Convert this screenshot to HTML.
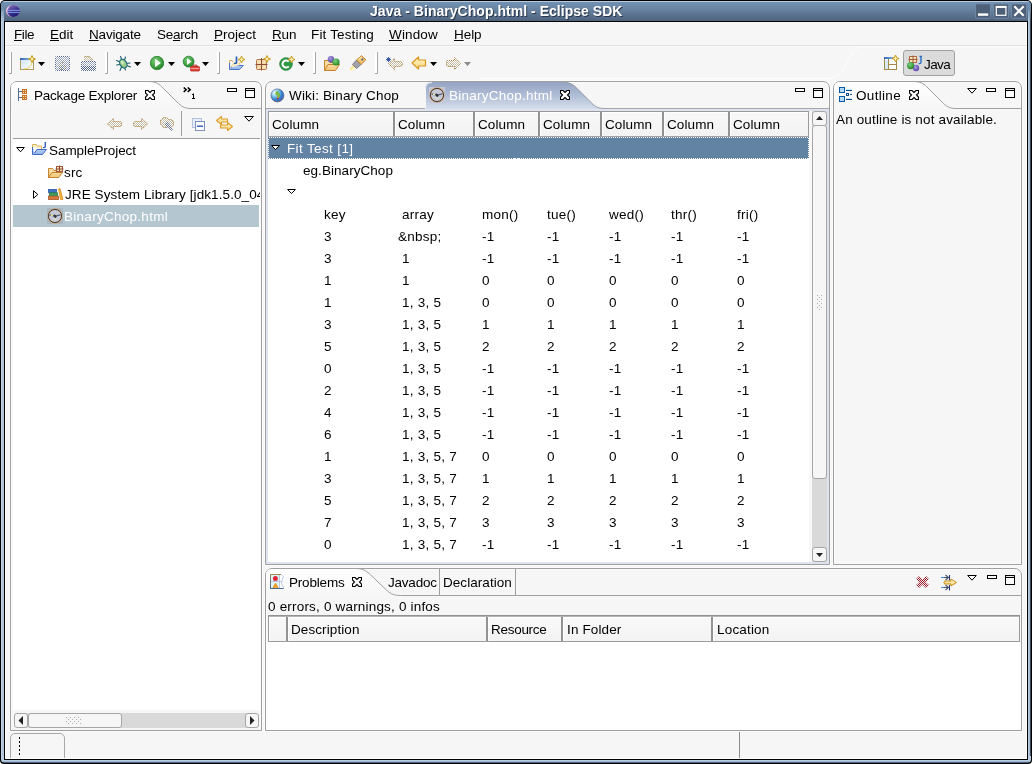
<!DOCTYPE html>
<html><head><meta charset="utf-8"><title>Java - BinaryChop.html - Eclipse SDK</title><style>

html,body{margin:0;padding:0;}
body{width:1032px;height:764px;position:relative;overflow:hidden;background:#fff;font-family:"Liberation Sans", sans-serif;}
.a{position:absolute;box-sizing:border-box;}
.t{position:absolute;will-change:transform;height:20px;line-height:20px;white-space:pre;font-family:"Liberation Sans", sans-serif;}
u{text-decoration:underline;text-underline-offset:1px;}

</style></head><body>
<div class="a" style="left:0;top:0;width:1032px;height:764px;background:#000;border-radius:5px 5px 4px 4px;"></div>
<div class="a" style="left:1px;top:1px;width:1030px;height:20px;border-radius:4px 4px 0 0;background:linear-gradient(to bottom,#b4cce6 0px,#b4cce6 1px,#7292b2 1px,#6a86a5 7px,#5c7591 13px,#4f647e 20px);"></div>
<div class="a" style="left:1px;top:10px;width:1px;height:750px;background:#c0d6ec;"></div>
<div class="a" style="left:2px;top:10px;width:1px;height:750px;background:#aec2d6;"></div>
<div class="a" style="left:3px;top:10px;width:1px;height:750px;background:#b2c6da;"></div>
<div class="a" style="left:1px;top:6px;width:3px;height:16px;background:linear-gradient(to bottom,rgba(110,140,170,1),rgba(110,140,170,0));"></div>
<div class="a" style="left:1028px;top:10px;width:1px;height:750px;background:#b8ccdf;"></div>
<div class="a" style="left:1029px;top:10px;width:1px;height:750px;background:#a6bace;"></div>
<div class="a" style="left:1030px;top:10px;width:1px;height:750px;background:#3a4a5c;"></div>
<div class="a" style="left:1028px;top:6px;width:3px;height:16px;background:linear-gradient(to bottom,rgba(110,140,170,1),rgba(110,140,170,0));"></div>
<div class="a" style="left:1px;top:756px;width:1030px;height:7px;border-radius:0 0 4px 4px;background:linear-gradient(to bottom,#b8cce0 0,#b8cce0 5px,#a0b8d3 5px,#a0b8d3 6px,#4a6280 6px);"></div>
<div class="a" style="left:4px;top:21px;width:1024px;height:739px;background:#000;"></div>
<div class="a" style="left:5px;top:22px;width:1022px;height:737px;background:#f6f6f6;"></div>
<div class="a" style="left:5px;top:758px;width:1022px;height:1px;background:#fff;"></div>
<div class="a" style="left:1026px;top:22px;width:1px;height:737px;background:#fff;"></div>
<div class="a" style="left:5px;top:22px;width:1px;height:737px;background:#fff;"></div>
<svg class="a" style="left:975px;top:3px;" width="16" height="16" viewBox="0 0 16 16"><rect x="0.6" y="0.9" width="14.8" height="14.4" rx="1" fill="#4e6078" stroke="#748ca8" stroke-width="0.9"/><rect x="3" y="10.4" width="10.2" height="2.4" fill="#fff"/></svg>
<svg class="a" style="left:993px;top:3px;" width="16" height="16" viewBox="0 0 16 16"><rect x="0.6" y="0.9" width="14.8" height="14.4" rx="1" fill="#4e6078" stroke="#748ca8" stroke-width="0.9"/><rect x="3.3" y="4" width="9.6" height="8.3" fill="none" stroke="#fff" stroke-width="1.2"/><rect x="2.7" y="2.9" width="10.8" height="2" fill="#fff"/></svg>
<svg class="a" style="left:1011px;top:3px;" width="16" height="16" viewBox="0 0 16 16"><rect x="0.6" y="0.9" width="14.8" height="14.4" rx="1" fill="#4e6078" stroke="#748ca8" stroke-width="0.9"/><path d="M3.3 3.2 L12.7 12.8 M12.7 3.2 L3.3 12.8" stroke="#fff" stroke-width="2.1" fill="none"/></svg>
<svg class="a" style="left:5px;top:4px;" width="16" height="14" viewBox="0 0 16 14"><defs><linearGradient id="eg" x1="0.2" y1="0" x2="0.8" y2="1"><stop offset="0" stop-color="#8a70c0"/><stop offset="0.45" stop-color="#3c3490"/><stop offset="1" stop-color="#0e0c66"/></linearGradient>
<radialGradient id="ep" cx="0.3" cy="0.25" r="0.8"><stop offset="0" stop-color="#f6d4ec"/><stop offset="1" stop-color="#e29cc8"/></radialGradient><clipPath id="ec"><ellipse cx="8" cy="7" rx="7.1" ry="6.1"/></clipPath></defs>
<ellipse cx="8" cy="7" rx="7.1" ry="6.1" fill="url(#ep)"/><g clip-path="url(#ec)"><ellipse cx="10.2" cy="7" rx="7.6" ry="6.8" fill="url(#eg)"/>
<rect x="2" y="5.9" width="14" height="1.1" fill="#7f8fdc"/><rect x="2" y="7.9" width="14" height="1.1" fill="#7f8fdc"/></g></svg>
<div class="a" style="left:5px;top:45px;width:1022px;height:1px;background:#e1e1e1;"></div>
<div class="a" style="left:5px;top:46px;width:1022px;height:1px;background:#fbfbfb;"></div>
<div class="a" style="left:9px;top:52px;width:2px;height:21px;background:#ffffff;"></div>
<div class="a" style="left:11px;top:52px;width:1px;height:22px;background:#a8a8a8;"></div>
<div class="a" style="left:9px;top:73px;width:2px;height:1px;background:#a8a8a8;"></div>
<div class="a" style="left:105px;top:52px;width:2px;height:21px;background:#ffffff;"></div>
<div class="a" style="left:107px;top:52px;width:1px;height:22px;background:#a8a8a8;"></div>
<div class="a" style="left:105px;top:73px;width:2px;height:1px;background:#a8a8a8;"></div>
<div class="a" style="left:217px;top:52px;width:2px;height:21px;background:#ffffff;"></div>
<div class="a" style="left:219px;top:52px;width:1px;height:22px;background:#a8a8a8;"></div>
<div class="a" style="left:217px;top:73px;width:2px;height:1px;background:#a8a8a8;"></div>
<div class="a" style="left:313px;top:52px;width:2px;height:21px;background:#ffffff;"></div>
<div class="a" style="left:315px;top:52px;width:1px;height:22px;background:#a8a8a8;"></div>
<div class="a" style="left:313px;top:73px;width:2px;height:1px;background:#a8a8a8;"></div>
<div class="a" style="left:375px;top:52px;width:2px;height:21px;background:#ffffff;"></div>
<div class="a" style="left:377px;top:52px;width:1px;height:22px;background:#a8a8a8;"></div>
<div class="a" style="left:375px;top:73px;width:2px;height:1px;background:#a8a8a8;"></div>
<svg width="0" height="0" style="position:absolute"><defs>
<pattern id="dz" width="2" height="2" patternUnits="userSpaceOnUse"><rect width="2" height="2" fill="#fff"/><rect x="0" y="0" width="1" height="1" fill="#56668a"/><rect x="1" y="1" width="1" height="1" fill="#56668a"/></pattern>
<pattern id="dzl" width="2" height="2" patternUnits="userSpaceOnUse"><rect width="2" height="2" fill="#fff"/><rect x="0" y="0" width="1" height="1" fill="#9fa8bc"/><rect x="1" y="1" width="1" height="1" fill="#9fa8bc"/></pattern>
<pattern id="dzy" width="2" height="2" patternUnits="userSpaceOnUse"><rect width="2" height="2" fill="#fff"/><rect x="0" y="0" width="1" height="1" fill="#8f7f5e"/><rect x="1" y="1" width="1" height="1" fill="#8f7f5e"/></pattern>
<pattern id="dzyl" width="2" height="2" patternUnits="userSpaceOnUse"><rect width="2" height="2" fill="#fff"/><rect x="0" y="0" width="1" height="1" fill="#c4bca8"/><rect x="1" y="1" width="1" height="1" fill="#c4bca8"/></pattern>
<pattern id="dzr" width="2" height="2" patternUnits="userSpaceOnUse"><rect width="2" height="2" fill="#f0e4e4"/><rect x="0" y="0" width="1" height="1" fill="#9a1f2e"/><rect x="1" y="1" width="1" height="1" fill="#9a1f2e"/></pattern>
<linearGradient id="gwin" x1="0" y1="0" x2="1" y2="1"><stop offset="0" stop-color="#cfe4f7"/><stop offset="1" stop-color="#ffffff"/></linearGradient>
<linearGradient id="gbar" x1="0" y1="0" x2="1" y2="0"><stop offset="0" stop-color="#2d62b5"/><stop offset="1" stop-color="#8fb6e4"/></linearGradient>
<radialGradient id="ggreen" cx="0.4" cy="0.35" r="0.7"><stop offset="0" stop-color="#7fd07f"/><stop offset="0.7" stop-color="#3a9a3a"/><stop offset="1" stop-color="#1f7a24"/></radialGradient>
<radialGradient id="gpurp" cx="0.4" cy="0.35" r="0.7"><stop offset="0" stop-color="#a99be0"/><stop offset="1" stop-color="#5a44a8"/></radialGradient>
<linearGradient id="gyel" x1="0" y1="0" x2="0" y2="1"><stop offset="0" stop-color="#fff6cc"/><stop offset="1" stop-color="#f9d67a"/></linearGradient>
<linearGradient id="gfold" x1="0" y1="0" x2="0" y2="1"><stop offset="0" stop-color="#fbe6b4"/><stop offset="1" stop-color="#f2c77a"/></linearGradient>
<linearGradient id="gbfold" x1="0" y1="0" x2="0" y2="1"><stop offset="0" stop-color="#cfe0f8"/><stop offset="1" stop-color="#8fb2ea"/></linearGradient>
</defs></svg>
<svg class="a" style="left:19px;top:55px;" width="18" height="17" viewBox="0 0 18 17"><rect x="1.5" y="3.5" width="13" height="11" fill="url(#gwin)" stroke="#b39a5c"/><rect x="1" y="3" width="11" height="2" fill="url(#gbar)"/><path d="M13 5.5 C13.5 11, 10 13.5, 5 13.8" fill="none" stroke="#f0cf6a" stroke-width="1"/><path d="M13 0.5 L14 3 L16.5 4 L14 5 L13 7.5 L12 5 L9.5 4 L12 3 Z" fill="#fff3b0" stroke="#c89a1e" stroke-width="1" stroke-linejoin="round"/></svg>
<svg class="a" style="left:38px;top:62px;" width="7" height="4" viewBox="0 0 7 4"><path d="M0 0 H7 L3.5 4 Z" fill="#000"/></svg>
<svg class="a" style="left:55px;top:56px;" width="16" height="15" viewBox="0 0 16 15"><path d="M1 0 H14 L15 1 V14 L14 15 H1 L0 14 V1 Z" fill="url(#dz)"/><rect x="1" y="1" width="13" height="13" fill="url(#dzl)"/><rect x="4" y="9" width="7" height="6" fill="url(#dz)" opacity="0.6"/><rect x="7" y="6" width="1" height="1" fill="#c9a44a"/><rect x="5" y="9" width="1" height="1" fill="#c9a44a"/><rect x="9" y="11" width="1" height="1" fill="#c9a44a"/><rect x="6" y="13" width="1" height="1" fill="#c9a44a"/></svg>
<svg class="a" style="left:81px;top:56px;" width="16" height="15" viewBox="0 0 16 15"><path d="M3 0 H9 L12 3 V5 H3 Z" fill="url(#dzyl)"/><path d="M0 5 H15 V14 L14 15 H1 L0 14 Z" fill="url(#dz)"/><rect x="1" y="6" width="13" height="4" fill="url(#dzl)"/><path d="M3.5 0.5 H8 L11.5 4" stroke="#a88a3a" stroke-width="1" fill="none" stroke-dasharray="1 1"/></svg>
<svg class="a" style="left:115px;top:55px;" width="17" height="17" viewBox="0 0 17 17"><g stroke="#1c5e6e" stroke-width="1.1" fill="none" stroke-linecap="round"><path d="M5.5 1.5 L7 5"/><path d="M10.5 2 L9.5 5"/><path d="M1.5 5.5 L5 7"/><path d="M1.5 10 L5 9.5"/><path d="M15 8 L11.5 8.5"/><path d="M15.5 12 L12 10.5"/><path d="M5 15.5 L6.5 12"/><path d="M10.5 15 L9.5 12.5"/></g><ellipse cx="8.3" cy="8.6" rx="3.3" ry="4.6" transform="rotate(-32 8.3 8.6)" fill="#9ccb86" stroke="#1f6b78" stroke-width="1.2"/><ellipse cx="7.4" cy="7.6" rx="1.3" ry="2.2" transform="rotate(-32 7.4 7.6)" fill="#cfe9c2"/></svg>
<svg class="a" style="left:134px;top:62px;" width="7" height="4" viewBox="0 0 7 4"><path d="M0 0 H7 L3.5 4 Z" fill="#000"/></svg>
<svg class="a" style="left:150px;top:56px;" width="14" height="14" viewBox="0 0 14 14"><circle cx="7" cy="7" r="6.7" fill="url(#ggreen)" stroke="#1e7d28" stroke-width="0.8"/><path d="M5 2.8 L10.8 7 L5 11.2 Z" fill="#fff"/><path d="M5 2.8 L10.8 7 L5 7 Z" fill="#eaf6ea"/></svg>
<svg class="a" style="left:168px;top:62px;" width="7" height="4" viewBox="0 0 7 4"><path d="M0 0 H7 L3.5 4 Z" fill="#000"/></svg>
<svg class="a" style="left:182px;top:55px;" width="18" height="17" viewBox="0 0 18 17"><circle cx="6.6" cy="6.6" r="5.4" fill="url(#ggreen)" stroke="#1e7d28" stroke-width="0.8"/><path d="M5 3.2 L9.6 6.6 L5 10 Z" fill="#fff"/><rect x="8.5" y="11.5" width="9" height="4.5" rx="0.8" fill="#e0483e" stroke="#b8261e" stroke-width="0.8"/><path d="M11 11.5 V10.2 H15 V11.5" fill="none" stroke="#b8261e" stroke-width="1"/><rect x="8.5" y="13" width="9" height="0.9" fill="#f4a39c"/></svg>
<svg class="a" style="left:202px;top:62px;" width="7" height="4" viewBox="0 0 7 4"><path d="M0 0 H7 L3.5 4 Z" fill="#000"/></svg>
<svg class="a" style="left:227px;top:54px;" width="19" height="18" viewBox="0 0 19 18"><path d="M2.5 9 L2.5 15.5 L12.5 15.5 L16.5 11.5 L6.5 11.5 L4 14" fill="url(#gbfold)" stroke="#4b74c8" stroke-width="1" stroke-linejoin="round"/><path d="M2.5 9 L2.5 6.5 L5 6.5 L6 8" fill="none" stroke="#d6b060" stroke-width="1"/><path d="M3.5 13.5 L6.5 9 L13 9 L13 11" fill="#fdf3d0" stroke="#e8c878" stroke-width="0.8"/><path d="M9.5 2.5 V8 Q9.5 9.5 8 9.5 H7" fill="none" stroke="#2b5fb4" stroke-width="1.7"/><path d="M14.5 2.0 L15.5 4.5 L18.0 5.5 L15.5 6.5 L14.5 9.0 L13.5 6.5 L11.0 5.5 L13.5 4.5 Z" fill="#fff3b0" stroke="#c89a1e" stroke-width="1" stroke-linejoin="round"/></svg>
<svg class="a" style="left:254px;top:54px;" width="19" height="18" viewBox="0 0 19 18"><rect x="2.5" y="5.5" width="10" height="10" rx="1" fill="#f0d2a4" stroke="#b4744e" stroke-width="1"/><path d="M7.5 4 V16.5 M1.5 10.5 H13.5" stroke="#8f4a36" stroke-width="1"/><rect x="3.6" y="6.6" width="3" height="3" fill="#fbe6b8"/><rect x="8.6" y="6.6" width="3" height="3" fill="#f6dcae"/><rect x="3.6" y="11.6" width="3" height="3" fill="#f6dcae"/><rect x="8.6" y="11.6" width="3" height="3" fill="#fbe6b8"/><path d="M13 1.5 L14 4 L16.5 5 L14 6 L13 8.5 L12 6 L9.5 5 L12 4 Z" fill="#fff3b0" stroke="#c89a1e" stroke-width="1" stroke-linejoin="round"/></svg>
<svg class="a" style="left:278px;top:54px;" width="19" height="18" viewBox="0 0 19 18"><circle cx="8" cy="10" r="6.3" fill="#2f9a46" stroke="#1f7f36" stroke-width="0.8"/><path d="M10.8 7.6 A3.6 3.6 0 1 0 10.8 12.4" fill="none" stroke="#fff" stroke-width="2"/><path d="M13.5 2.0 L14.5 4.5 L17.0 5.5 L14.5 6.5 L13.5 9.0 L12.5 6.5 L10.0 5.5 L12.5 4.5 Z" fill="#fff3b0" stroke="#c89a1e" stroke-width="1" stroke-linejoin="round"/></svg>
<svg class="a" style="left:298px;top:62px;" width="7" height="4" viewBox="0 0 7 4"><path d="M0 0 H7 L3.5 4 Z" fill="#000"/></svg>
<svg class="a" style="left:323px;top:55px;" width="18" height="17" viewBox="0 0 18 17"><path d="M1.5 5.5 L1.5 15.5 L12.5 15.5 L16.5 9.5 L14 9.5 L14 7.5 L7 7.5 L5.5 5.5 Z" fill="url(#gfold)" stroke="#c8812c" stroke-width="1" stroke-linejoin="round"/><path d="M1.5 15.5 L5 9.5 L16.5 9.5" fill="none" stroke="#c8812c" stroke-width="1"/><circle cx="8" cy="4.2" r="3.2" fill="url(#gpurp)"/><circle cx="13" cy="7" r="3.6" fill="url(#ggreen)"/></svg>
<svg class="a" style="left:349px;top:55px;" width="18" height="17" viewBox="0 0 18 17"><path d="M0.5 15.5 L4 9 L8 13 L2 16 Z" fill="#fff6c0"/><path d="M1.5 14.5 L5 10" stroke="#f4d878" stroke-width="1.2"/><path d="M3.5 9.5 L7.5 5 L12 9.5 L7.5 13.5 Z" fill="#a2a2aa" stroke="#6c6c78" stroke-width="0.8"/><path d="M7.5 5 L12.5 0.8 L16.8 4.8 L12 9.5 Z" fill="#f6c46a" stroke="#b8782a" stroke-width="1"/><path d="M9.5 4.5 L13 1.8" stroke="#fde9a8" stroke-width="1.2"/><circle cx="13.3" cy="4.5" r="0.9" fill="#2b4fa8"/></svg>
<svg class="a" style="left:385px;top:56px;" width="18" height="15" viewBox="0 0 18 15"><path d="M3.5 7.5 L9.5 2.5 V5.5 H15.5 L17.5 7 V9 L15.5 10.5 H9.5 V13.5 Z" fill="url(#dzyl)" stroke="#a87a34" stroke-width="1" stroke-dasharray="1 1"/><path d="M1 3.5 H6 M3.5 1 V6 M1.7 1.7 L5.3 5.3 M5.3 1.7 L1.7 5.3" stroke="#2b4f9c" stroke-width="0.9"/></svg>
<svg class="a" style="left:411px;top:56px;" width="16" height="14" viewBox="0 0 16 14"><path d="M1 7 L7.5 1 V4 H14.5 V10 H7.5 V13 Z" fill="url(#gyel)" stroke="#dc961e" stroke-width="1.2" stroke-linejoin="round"/></svg>
<svg class="a" style="left:430px;top:62px;" width="7" height="4" viewBox="0 0 7 4"><path d="M0 0 H7 L3.5 4 Z" fill="#000"/></svg>
<svg class="a" style="left:446px;top:57px;" width="15" height="13" viewBox="0 0 15 13"><path d="M14.5 6.5 L8.5 0.5 V3.5 H1.5 L0.5 4.5 V8.5 L1.5 9.5 H8.5 V12.5 Z" fill="url(#dzyl)" stroke="#a87a34" stroke-width="1" stroke-dasharray="1 1"/></svg>
<svg class="a" style="left:464px;top:62px;" width="7" height="4" viewBox="0 0 7 4"><path d="M0 0 H7 L3.5 4 Z" fill="#8a8a8a"/></svg>
<svg class="a" style="left:883px;top:54px;" width="17" height="17" viewBox="0 0 17 17"><rect x="1.5" y="3.5" width="12" height="12" fill="#fff" stroke="#a08a4a"/><rect x="1" y="3" width="10" height="2" fill="url(#gbar)"/><rect x="2" y="6" width="3" height="9" fill="#d8eafa"/><path d="M5.5 5 V15 M5.5 10.5 H13" stroke="#a08a4a" stroke-width="1"/><path d="M12.5 1.0 L13.5 3.5 L16.0 4.5 L13.5 5.5 L12.5 8.0 L11.5 5.5 L9.0 4.5 L11.5 3.5 Z" fill="#fff3b0" stroke="#c89a1e" stroke-width="1" stroke-linejoin="round"/></svg>
<svg class="a" style="left:480px;top:44px" width="547" height="40" viewBox="0 0 547 40"><path d="M0 34.5 H350 C 368 34.5, 366 2.5, 384 2.5 H547" fill="none" stroke="#fdfdfd" stroke-width="1"/></svg>
<div class="a" style="left:903px;top:50px;width:52px;height:26px;background:#dbdbdb;border:1px solid #a0a0a0;border-radius:3px;"></div>
<svg class="a" style="left:906px;top:55px;" width="19" height="17" viewBox="0 0 19 17"><rect x="3.5" y="1.5" width="7" height="6" fill="#f8e4bc" stroke="#b4694a" stroke-width="1"/><path d="M7 0.5 V8.5 M2.5 4.5 H11.5" stroke="#a05a3a" stroke-width="1"/><path d="M13.5 1.5 H16 M15 1.5 V7 Q15 8.6 13.4 8.6 H12.6" fill="none" stroke="#2b6fc4" stroke-width="1.4"/><circle cx="10" cy="13" r="3.2" fill="url(#gpurp)"/><circle cx="4.6" cy="10.6" r="3.6" fill="url(#ggreen)"/></svg>
<div class="a" style="left:10px;top:81px;width:252px;height:650px;border:1px solid #a0a0a0;border-radius:7px 7px 0 0;background:#f6f6f6;box-shadow:0 0 0 1px #fbfbfb, inset 0 0 0 1px #fbfbfb;"></div>
<svg class="a" style="left:11px;top:82px;" width="183" height="27" viewBox="0 0 183 27"><defs><linearGradient id="tw150" x1="0" y1="0" x2="0" y2="1"><stop offset="0" stop-color="#ffffff"/><stop offset="1" stop-color="#f6f6f6"/></linearGradient></defs><path d="M0 27 V6 Q0 0 6 0 H139 c 7.0 0.5, 9.5 3, 13.0 6.5 l 14.0 14 c 4.0 4, 7.0 6.5, 14.0 6.5 Z" fill="url(#tw150)"/></svg>
<svg class="a" style="left:150px;top:81px;" width="112" height="29" viewBox="0 0 112 29"><path d="M0 0.5 C 7.0 1, 9.5 3.5, 13.0 7 L 27.0 21 C 31.0 25, 34.0 27.5, 41.0 27.5 H 111" fill="none" stroke="#a0a0a0" stroke-width="1"/></svg>
<svg class="a" style="left:145px;top:90px;" width="10" height="10" viewBox="0 0 10 10"><path d="M0.5 0.5 H3 L5 2.5 L7 0.5 H9.5 V3 L7.5 5 L9.5 7 V9.5 H7 L5 7.5 L3 9.5 H0.5 V7 L2.5 5 L0.5 3 Z" fill="none" stroke="#000" stroke-width="1.1" stroke-linejoin="miter"/></svg>
<svg class="a" style="left:183px;top:87px;" width="12" height="13" viewBox="0 0 12 13"><path d="M0.7 0.5 L3.2 2.7 L0.7 4.9 M4.7 0.5 L7.2 2.7 L4.7 4.9" fill="none" stroke="#000" stroke-width="1.5"/><path d="M9 7.8 L10.5 6.8 V11.5 M9 11.5 H12" fill="none" stroke="#000" stroke-width="1"/></svg>
<svg class="a" style="left:227px;top:88px;shape-rendering:crispEdges" width="10" height="4" viewBox="0 0 10 4"><rect width="10" height="4" fill="#000"/><rect x="1" y="1" width="8" height="2" fill="#fff"/></svg>
<svg class="a" style="left:245px;top:88px;shape-rendering:crispEdges" width="10" height="10" viewBox="0 0 10 10"><rect width="10" height="10" fill="#000"/><rect x="1" y="1" width="8" height="1" fill="#e8e8e8"/><rect x="1" y="3" width="8" height="6" fill="#fff"/></svg>
<div class="a" style="left:181px;top:111px;width:1px;height:25px;background:#a0a0a0;"></div>
<svg class="a" style="left:244px;top:116px;" width="10" height="6" viewBox="0 0 10 6"><path d="M0.7 0.5 H9.3 L5 5.2 Z" fill="#fff" stroke="#000" stroke-width="1"/></svg>
<div class="a" style="left:13px;top:138px;width:247px;height:1px;background:#9e9e9e;"></div>
<div class="a" style="left:13px;top:139px;width:247px;height:571px;background:#fff;"></div>
<div class="a" style="left:13px;top:205px;width:246px;height:22px;background:#b4c7d0;"></div>
<div class="a" style="left:13px;top:710px;width:247px;height:20px;background:#f6f6f6;"></div>
<div class="a" style="left:16px;top:713px;width:241px;height:15px;background:#d9d9d9;"></div>
<div class="a" style="left:14px;top:713px;width:14px;height:15px;border:1px solid #a6a6a6;border-radius:3px;background:#f6f6f6;"></div>
<div class="a" style="left:245px;top:713px;width:14px;height:15px;border:1px solid #a6a6a6;border-radius:3px;background:#f6f6f6;"></div>
<div class="a" style="left:28px;top:713px;width:94px;height:15px;border:1px solid #a6a6a6;border-radius:3px;background:#f6f6f6;"></div>
<svg class="a" style="left:18px;top:716px;" width="5" height="9" viewBox="0 0 5 9"><path d="M5 0 V9 L0.5 4.5 Z" fill="#222"/></svg>
<svg class="a" style="left:250px;top:716px;" width="5" height="9" viewBox="0 0 5 9"><path d="M0 0 V9 L4.5 4.5 Z" fill="#222"/></svg>
<svg class="a" style="left:65px;top:717px;" width="18" height="7" viewBox="0 0 18 7"><g fill="#ababab"><rect x="1" y="0" width="1" height="1"/><rect x="3" y="2" width="1" height="1"/><rect x="1" y="4" width="1" height="1"/><rect x="3" y="6" width="1" height="1"/><rect x="5" y="0" width="1" height="1"/><rect x="7" y="2" width="1" height="1"/><rect x="5" y="4" width="1" height="1"/><rect x="7" y="6" width="1" height="1"/><rect x="9" y="0" width="1" height="1"/><rect x="11" y="2" width="1" height="1"/><rect x="9" y="4" width="1" height="1"/><rect x="11" y="6" width="1" height="1"/><rect x="13" y="0" width="1" height="1"/><rect x="15" y="2" width="1" height="1"/><rect x="13" y="4" width="1" height="1"/><rect x="15" y="6" width="1" height="1"/></g></svg>
<div class="a" style="left:265px;top:81px;width:565px;height:484px;border:1px solid #a0a0a0;border-radius:7px 7px 0 0;background:#f6f6f6;box-shadow:0 0 0 1px #fbfbfb, inset 0 0 0 1px #fbfbfb;"></div>
<div class="a" style="left:266px;top:108px;width:160px;height:1px;background:#a6a6a6;"></div>
<div class="a" style="left:604px;top:108px;width:225px;height:1px;background:#a6a6a6;"></div>
<svg class="a" style="left:420px;top:82px;" width="200" height="27" viewBox="0 0 200 27"><defs><linearGradient id="tg" x1="0" y1="0" x2="0" y2="1"><stop offset="0" stop-color="#95a4c4"/><stop offset="0.5" stop-color="#b0bdd6"/><stop offset="1" stop-color="#d6deec"/></linearGradient></defs>
<path d="M5 27 L5 7 Q5 0 12 0 L144.5 0 c 7 0.5, 9.5 3, 13 6.5 l14 14 c 4 4, 7 6.5, 14 6.5 Z" fill="url(#tg)"/>
<path d="M5.5 27 L5.5 7 Q5.5 0.5 12 0.5" fill="none" stroke="#f4f6fa" stroke-width="1"/>
<path d="M144.5 0.5 c 7 0.5, 9.5 3, 13 6.5 l14 14 c 4 4, 7 5.5, 14 5.5" fill="none" stroke="#9c9ea6" stroke-width="1"/></svg>
<div class="a" style="left:266px;top:109px;width:563px;height:2px;background:#dde3f0;"></div>
<div class="a" style="left:266px;top:109px;width:2px;height:455px;background:#dde3f0;"></div>
<div class="a" style="left:827px;top:109px;width:2px;height:455px;background:#dde3f0;"></div>
<div class="a" style="left:266px;top:562px;width:563px;height:2px;background:#dde3f0;"></div>
<svg class="a" style="left:560px;top:90px;" width="10" height="10" viewBox="0 0 10 10"><path d="M0.5 0.5 H3 L5 2.5 L7 0.5 H9.5 V3 L7.5 5 L9.5 7 V9.5 H7 L5 7.5 L3 9.5 H0.5 V7 L2.5 5 L0.5 3 Z" fill="#fff" stroke="#000" stroke-width="1.1" stroke-linejoin="miter"/></svg>
<svg class="a" style="left:795px;top:88px;shape-rendering:crispEdges" width="10" height="4" viewBox="0 0 10 4"><rect width="10" height="4" fill="#000"/><rect x="1" y="1" width="8" height="2" fill="#fff"/></svg>
<svg class="a" style="left:813px;top:88px;shape-rendering:crispEdges" width="10" height="10" viewBox="0 0 10 10"><rect width="10" height="10" fill="#000"/><rect x="1" y="1" width="8" height="1" fill="#e8e8e8"/><rect x="1" y="3" width="8" height="6" fill="#fff"/></svg>
<div class="a" style="left:268px;top:111px;width:541px;height:451px;background:#fff;"></div>
<div class="a" style="left:809px;top:111px;width:3px;height:451px;background:#f8f8f8;"></div>
<div class="a" style="left:268px;top:111px;width:541px;height:26px;background:linear-gradient(#f8f8f8,#f3f3f3);border-top:1px solid #989898;border-bottom:1px solid #a2a2a2;border-left:1px solid #9a9a9a;border-right:1px solid #9a9a9a;"></div>
<div class="a" style="left:269px;top:112px;width:539px;height:1px;background:#fff;"></div>
<div class="a" style="left:269px;top:112px;width:1px;height:24px;background:#fff;"></div>
<div class="a" style="left:393px;top:112px;width:2px;height:24px;background:#929292;"></div>
<div class="a" style="left:395px;top:112px;width:1px;height:24px;background:#fff;"></div>
<div class="a" style="left:473px;top:112px;width:2px;height:24px;background:#929292;"></div>
<div class="a" style="left:475px;top:112px;width:1px;height:24px;background:#fff;"></div>
<div class="a" style="left:538px;top:112px;width:2px;height:24px;background:#929292;"></div>
<div class="a" style="left:540px;top:112px;width:1px;height:24px;background:#fff;"></div>
<div class="a" style="left:600px;top:112px;width:2px;height:24px;background:#929292;"></div>
<div class="a" style="left:602px;top:112px;width:1px;height:24px;background:#fff;"></div>
<div class="a" style="left:662px;top:112px;width:2px;height:24px;background:#929292;"></div>
<div class="a" style="left:664px;top:112px;width:1px;height:24px;background:#fff;"></div>
<div class="a" style="left:728px;top:112px;width:2px;height:24px;background:#929292;"></div>
<div class="a" style="left:730px;top:112px;width:1px;height:24px;background:#fff;"></div>
<div class="a" style="left:268px;top:137px;width:541px;height:22px;background:#6283a4;"></div>
<svg class="a" style="left:268px;top:137px;shape-rendering:crispEdges" width="541" height="22"><rect x="0.5" y="0.5" width="540" height="21" fill="none" stroke="#fff" stroke-width="1" stroke-dasharray="1 1"/></svg>
<svg class="a" style="left:271px;top:145px;" width="9" height="5" viewBox="0 0 9 5"><path d="M0.6 0.5 H8.4 L4.5 4.6 Z" fill="#fff" stroke="#000" stroke-width="1"/></svg>
<svg class="a" style="left:287px;top:189px;" width="9" height="5" viewBox="0 0 9 5"><path d="M0.6 0.5 H8.4 L4.5 4.6 Z" fill="#fff" stroke="#000" stroke-width="1"/></svg>
<div class="a" style="left:812px;top:111px;width:15px;height:451px;background:#d9d9d9;"></div>
<div class="a" style="left:812px;top:111px;width:15px;height:15px;border:1px solid #a6a6a6;border-radius:3px;background:#f6f6f6;"></div>
<div class="a" style="left:812px;top:125px;width:15px;height:354px;border:1px solid #a6a6a6;border-radius:3px;background:#f6f6f6;"></div>
<div class="a" style="left:812px;top:547px;width:15px;height:15px;border:1px solid #a6a6a6;border-radius:3px;background:#f6f6f6;"></div>
<svg class="a" style="left:816px;top:116px;" width="7" height="4" viewBox="0 0 7 4"><path d="M0 4 H7 L3.5 0 Z" fill="#222"/></svg>
<svg class="a" style="left:816px;top:553px;" width="7" height="4" viewBox="0 0 7 4"><path d="M0 0 H7 L3.5 4 Z" fill="#222"/></svg>
<svg class="a" style="left:817px;top:294px;" width="6" height="16" viewBox="0 0 6 16"><g fill="#ababab"><rect x="0" y="1" width="1" height="1"/><rect x="2" y="3" width="1" height="1"/><rect x="4" y="1" width="1" height="1"/><rect x="0" y="5" width="1" height="1"/><rect x="2" y="7" width="1" height="1"/><rect x="4" y="5" width="1" height="1"/><rect x="0" y="9" width="1" height="1"/><rect x="2" y="11" width="1" height="1"/><rect x="4" y="9" width="1" height="1"/><rect x="0" y="13" width="1" height="1"/><rect x="2" y="15" width="1" height="1"/><rect x="4" y="13" width="1" height="1"/></g></svg>
<div class="a" style="left:833px;top:81px;width:189px;height:484px;border:1px solid #a0a0a0;border-radius:7px 7px 0 0;background:#f6f6f6;box-shadow:0 0 0 1px #fbfbfb, inset 0 0 0 1px #fbfbfb;"></div>
<svg class="a" style="left:834px;top:82px;" width="125" height="27" viewBox="0 0 125 27"><defs><linearGradient id="tw915" x1="0" y1="0" x2="0" y2="1"><stop offset="0" stop-color="#ffffff"/><stop offset="1" stop-color="#f6f6f6"/></linearGradient></defs><path d="M0 27 V6 Q0 0 6 0 H81 c 7.0 0.5, 9.5 3, 13.0 6.5 l 14.0 14 c 4.0 4, 7.0 6.5, 14.0 6.5 Z" fill="url(#tw915)"/></svg>
<svg class="a" style="left:915px;top:81px;" width="107" height="29" viewBox="0 0 107 29"><path d="M0 0.5 C 7.0 1, 9.5 3.5, 13.0 7 L 27.0 21 C 31.0 25, 34.0 27.5, 41.0 27.5 H 106" fill="none" stroke="#a0a0a0" stroke-width="1"/></svg>
<svg class="a" style="left:909px;top:90px;" width="10" height="10" viewBox="0 0 10 10"><path d="M0.5 0.5 H3 L5 2.5 L7 0.5 H9.5 V3 L7.5 5 L9.5 7 V9.5 H7 L5 7.5 L3 9.5 H0.5 V7 L2.5 5 L0.5 3 Z" fill="none" stroke="#000" stroke-width="1.1" stroke-linejoin="miter"/></svg>
<svg class="a" style="left:967px;top:88px;" width="10" height="6" viewBox="0 0 10 6"><path d="M0.7 0.5 H9.3 L5 5.2 Z" fill="#fff" stroke="#000" stroke-width="1"/></svg>
<svg class="a" style="left:986px;top:88px;shape-rendering:crispEdges" width="10" height="4" viewBox="0 0 10 4"><rect width="10" height="4" fill="#000"/><rect x="1" y="1" width="8" height="2" fill="#fff"/></svg>
<svg class="a" style="left:1005px;top:88px;shape-rendering:crispEdges" width="10" height="10" viewBox="0 0 10 10"><rect width="10" height="10" fill="#000"/><rect x="1" y="1" width="8" height="1" fill="#e8e8e8"/><rect x="1" y="3" width="8" height="6" fill="#fff"/></svg>
<div class="a" style="left:265px;top:568px;width:757px;height:163px;border:1px solid #a0a0a0;border-radius:7px 7px 0 0;background:#f6f6f6;box-shadow:0 0 0 1px #fbfbfb, inset 0 0 0 1px #fbfbfb;"></div>
<svg class="a" style="left:266px;top:569px;" width="137" height="27" viewBox="0 0 137 27"><defs><linearGradient id="tw357" x1="0" y1="0" x2="0" y2="1"><stop offset="0" stop-color="#ffffff"/><stop offset="1" stop-color="#f6f6f6"/></linearGradient></defs><path d="M0 27 V6 Q0 0 6 0 H91 c 7.4 0.5, 10.0 3, 13.7 6.5 l 14.7 14 c 4.2 4, 7.4 6.5, 14.7 6.5 Z" fill="url(#tw357)"/></svg>
<svg class="a" style="left:357px;top:568px;" width="665" height="29" viewBox="0 0 665 29"><path d="M0 0.5 C 7.4 1, 10.0 3.5, 13.7 7 L 28.4 21 C 32.6 25, 35.8 27.5, 43.2 27.5 H 664" fill="none" stroke="#a0a0a0" stroke-width="1"/></svg>
<svg class="a" style="left:352px;top:577px;" width="10" height="10" viewBox="0 0 10 10"><path d="M0.5 0.5 H3 L5 2.5 L7 0.5 H9.5 V3 L7.5 5 L9.5 7 V9.5 H7 L5 7.5 L3 9.5 H0.5 V7 L2.5 5 L0.5 3 Z" fill="none" stroke="#000" stroke-width="1.1" stroke-linejoin="miter"/></svg>
<div class="a" style="left:439px;top:569px;width:1px;height:26px;background:#a0a0a0;"></div>
<div class="a" style="left:515px;top:569px;width:1px;height:26px;background:#a0a0a0;"></div>
<svg class="a" style="left:967px;top:575px;" width="10" height="6" viewBox="0 0 10 6"><path d="M0.7 0.5 H9.3 L5 5.2 Z" fill="#fff" stroke="#000" stroke-width="1"/></svg>
<svg class="a" style="left:987px;top:575px;shape-rendering:crispEdges" width="10" height="4" viewBox="0 0 10 4"><rect width="10" height="4" fill="#000"/><rect x="1" y="1" width="8" height="2" fill="#fff"/></svg>
<svg class="a" style="left:1005px;top:575px;shape-rendering:crispEdges" width="10" height="10" viewBox="0 0 10 10"><rect width="10" height="10" fill="#000"/><rect x="1" y="1" width="8" height="1" fill="#e8e8e8"/><rect x="1" y="3" width="8" height="6" fill="#fff"/></svg>
<div class="a" style="left:266px;top:642px;width:755px;height:88px;background:#fff;"></div>
<div class="a" style="left:268px;top:617px;width:751px;height:24px;background:#f6f6f6;"></div>
<div class="a" style="left:268px;top:615px;width:752px;height:27px;background:linear-gradient(#f8f8f8,#f3f3f3);border-top:2px solid #929292;border-bottom:1px solid #9c9c9c;border-left:1px solid #9a9a9a;border-right:1px solid #9a9a9a;"></div>
<div class="a" style="left:269px;top:616px;width:750px;height:1px;background:#b4b4b4;"></div>
<div class="a" style="left:269px;top:617px;width:750px;height:1px;background:#fff;"></div>
<div class="a" style="left:269px;top:617px;width:1px;height:24px;background:#fff;"></div>
<div class="a" style="left:286px;top:617px;width:2px;height:24px;background:#929292;"></div>
<div class="a" style="left:288px;top:617px;width:1px;height:24px;background:#fff;"></div>
<div class="a" style="left:486px;top:617px;width:2px;height:24px;background:#929292;"></div>
<div class="a" style="left:488px;top:617px;width:1px;height:24px;background:#fff;"></div>
<div class="a" style="left:561px;top:617px;width:2px;height:24px;background:#929292;"></div>
<div class="a" style="left:563px;top:617px;width:1px;height:24px;background:#fff;"></div>
<div class="a" style="left:711px;top:617px;width:2px;height:24px;background:#929292;"></div>
<div class="a" style="left:713px;top:617px;width:1px;height:24px;background:#fff;"></div>
<svg class="a" style="left:18px;top:88px;shape-rendering:crispEdges" width="10" height="13" viewBox="0 0 10 13"><rect x="0" y="0" width="1" height="13" fill="#5a6b90"/><rect x="1" y="3" width="3" height="1" fill="#5a6b90"/><rect x="1" y="9" width="3" height="1" fill="#5a6b90"/><rect x="4" y="1" width="5" height="5" fill="#c96f28"/><rect x="4" y="7" width="5" height="5" fill="#c96f28"/><rect x="5" y="2" width="1" height="1" fill="#fbe7a8"/><rect x="5" y="4" width="1" height="1" fill="#fbe7a8"/><rect x="5" y="8" width="1" height="1" fill="#fbe7a8"/><rect x="5" y="10" width="1" height="1" fill="#fbe7a8"/><rect x="7" y="2" width="1" height="1" fill="#fbe7a8"/><rect x="7" y="4" width="1" height="1" fill="#fbe7a8"/><rect x="7" y="8" width="1" height="1" fill="#fbe7a8"/><rect x="7" y="10" width="1" height="1" fill="#fbe7a8"/></svg>
<svg class="a" style="left:107px;top:118px;" width="15" height="12" viewBox="0 0 15 12"><path d="M0.5 6.0 L6.5 0.5 V3.5 H13.5 L14.5 4.5 V7.5 L13.5 8.5 H6.5 V11.5 Z" fill="url(#dzyl)" stroke="#a87a34" stroke-width="1" stroke-dasharray="1 1"/></svg>
<svg class="a" style="left:133px;top:118px;" width="15" height="12" viewBox="0 0 15 12"><path d="M14.5 6.0 L8.5 0.5 V3.5 H1.5 L0.5 4.5 V7.5 L1.5 8.5 H8.5 V11.5 Z" fill="url(#dzyl)" stroke="#a87a34" stroke-width="1" stroke-dasharray="1 1"/></svg>
<svg class="a" style="left:160px;top:117px;" width="14" height="15" viewBox="0 0 14 15"><path d="M0.5 3.5 L3.5 0.5 H6.5 L8.5 2.5 H11.5 L13.5 4.5 V8.5 L11.5 10.5 H3.5 L0.5 7.5 Z" fill="url(#dzyl)" stroke="#a87a34" stroke-width="1" stroke-dasharray="1 1"/><path d="M7 4.5 L9.5 7 L7 9.5 L4.5 7 Z" fill="#c8d4e0"/><path d="M5 7 L7.5 4.5 L13 12 L12 14 L10.5 13.5 L8.5 10.5 L6.5 11 Z" fill="url(#dz)" opacity="0.85"/></svg>
<svg class="a" style="left:192px;top:118px;" width="14" height="14" viewBox="0 0 14 14"><rect x="0.5" y="0.5" width="9" height="9" fill="#e6edf8" stroke="#b4c2dc"/><rect x="3.5" y="3.5" width="9" height="9" fill="#fff" stroke="#7d90c0"/><rect x="5" y="7.5" width="6" height="1.4" fill="#2c5cb0"/></svg>
<svg class="a" style="left:215px;top:115px;" width="19" height="18" viewBox="0 0 19 18"><path d="M1.5 5.5 L6.5 1.5 V4 H12.5 V7 H6.5 V9.5 Z" fill="url(#gyel)" stroke="#dc9b2c" stroke-width="1.1" stroke-linejoin="round"/><path d="M17.5 11.5 L12.5 7.5 V10 H5.5 V13 H12.5 V15.5 Z" fill="url(#gyel)" stroke="#dc9b2c" stroke-width="1.1" stroke-linejoin="round"/></svg>
<svg class="a" style="left:16px;top:147px;" width="9" height="6" viewBox="0 0 9 6"><path d="M0.7 0.5 H8.3 L4.5 4.8 Z" fill="#fff" stroke="#000" stroke-width="1"/></svg>
<svg class="a" style="left:33px;top:190px;" width="6" height="9" viewBox="0 0 6 9"><path d="M0.5 0.7 V8.3 L4.8 4.5 Z" fill="#fff" stroke="#000" stroke-width="1"/></svg>
<svg class="a" style="left:31px;top:141px;" width="17" height="16" viewBox="0 0 17 16"><path d="M1.5 5 V13.5 H11.5 L15.5 8.5 H6 L3.5 12" fill="url(#gbfold)" stroke="#3f69c4" stroke-width="1" stroke-linejoin="round"/><path d="M1.5 6 V3.5 H5.5 L6.5 5 H10.5 V8" fill="#fdf0c8" stroke="#dcb45c" stroke-width="1"/><path d="M14.3 1 V5.3 Q14.3 6.6 13 6.6 H12" fill="none" stroke="#2b62c0" stroke-width="1.4"/></svg>
<svg class="a" style="left:48px;top:165px;" width="16" height="14" viewBox="0 0 16 14"><path d="M0.5 3.5 V12.5 H10.5 L14.5 7.5 H12 V5.5 H6 L4.5 3.5 Z" fill="url(#gfold)" stroke="#c8812c" stroke-width="1" stroke-linejoin="round"/><path d="M0.5 12.5 L4 7.5 H14.5" fill="none" stroke="#c8812c" stroke-width="1"/><rect x="8.5" y="1.5" width="6" height="5" fill="#f8e2b8" stroke="#a4583a" stroke-width="1"/><path d="M11.5 0.5 V7 M7.5 4 H15.5" stroke="#8f4a36" stroke-width="1"/></svg>
<svg class="a" style="left:48px;top:188px;" width="16" height="12" viewBox="0 0 16 12"><rect x="0.5" y="1.5" width="8" height="3" fill="#3f74c8" stroke="#2a55a0" stroke-width="0.8"/><rect x="1.5" y="4.8" width="8" height="3" fill="#3fa064" stroke="#2a7a48" stroke-width="0.8"/><rect x="0.5" y="8.2" width="10" height="3.3" fill="#d8783a" stroke="#a85424" stroke-width="0.8"/><path d="M10.5 1 L12 0.5 L15 11.5 H12.5 Z" fill="#f4b63a" stroke="#d8922a" stroke-width="0.8"/></svg>
<svg class="a" style="left:47px;top:208px;" width="16" height="16" viewBox="0 0 16 16"><rect width="16" height="16" fill="#a9b7bf"/><circle cx="8" cy="8" r="6.9" fill="#c6cad6" stroke="#c8a484" stroke-width="1.6"/><circle cx="8" cy="8" r="6.6" fill="none" stroke="#4a3a32" stroke-width="1"/><path d="M2.5 6.8 L8 8.2 L13.5 6.8" fill="none" stroke="#596070" stroke-width="1.2"/><path d="M7 7 L9 9.5" stroke="#2f3442" stroke-width="2.2"/><rect x="4" y="6.5" width="2" height="1.5" fill="#e8e08a"/><rect x="6.5" y="10.5" width="3" height="1.2" fill="#e6e6c0"/></svg>
<svg class="a" style="left:429px;top:87px;" width="16" height="16" viewBox="0 0 16 16"><rect width="16" height="16" fill="#c4c7d4"/><circle cx="8" cy="8" r="6.9" fill="#c6cad6" stroke="#c8a484" stroke-width="1.6"/><circle cx="8" cy="8" r="6.6" fill="none" stroke="#4a3a32" stroke-width="1"/><path d="M2.5 6.8 L8 8.2 L13.5 6.8" fill="none" stroke="#596070" stroke-width="1.2"/><path d="M7 7 L9 9.5" stroke="#2f3442" stroke-width="2.2"/><rect x="4" y="6.5" width="2" height="1.5" fill="#e8e08a"/><rect x="6.5" y="10.5" width="3" height="1.2" fill="#e6e6c0"/></svg>
<svg class="a" style="left:270px;top:88px;" width="15" height="15" viewBox="0 0 15 15"><defs><radialGradient id="gl" cx="0.32" cy="0.3" r="0.8"><stop offset="0" stop-color="#ffffff"/><stop offset="0.3" stop-color="#9ad6ee"/><stop offset="0.6" stop-color="#3a8ad4"/><stop offset="1" stop-color="#3a55bc"/></radialGradient></defs><circle cx="7.4" cy="7.4" r="6.5" fill="url(#gl)" stroke="#4a5a88" stroke-width="0.6"/><path d="M6 3.5 L8 3 L9 5 L10.5 6.5 L9.5 9 L8 10.5 L7 9 L6.5 7 L5 6 Z" fill="#7ab848"/><path d="M7 8 L9 8.5 L8.5 10.5 L7.5 10 Z" fill="#b0a040"/><rect x="7" y="10" width="1.3" height="1.3" fill="#d01818"/><path d="M3.5 12.5 A6.5 6.5 0 0 0 13.5 9" fill="none" stroke="#8a8040" stroke-width="0.7" stroke-dasharray="1 1"/></svg>
<svg class="a" style="left:839px;top:87px;shape-rendering:crispEdges" width="14" height="15" viewBox="0 0 14 15"><rect x="0.5" y="0.5" width="5" height="5" fill="#b4daf8" stroke="#0a5aa8"/><rect x="0.5" y="9.5" width="5" height="5" fill="#b4daf8" stroke="#0a5aa8"/><rect x="7" y="2" width="6" height="1" fill="#cbeaff"/><rect x="7" y="3" width="6" height="1" fill="#0a4a90"/><rect x="7" y="11" width="6" height="1" fill="#cbeaff"/><rect x="7" y="12" width="6" height="1" fill="#0a4a90"/><rect x="7" y="6" width="3" height="3" fill="#0a4a8a"/><rect x="8" y="7" width="1" height="1" fill="#fff"/><rect x="11" y="7" width="2" height="1" fill="#0a4a90"/></svg>
<svg class="a" style="left:270px;top:574px;" width="15" height="15" viewBox="0 0 15 15"><defs><linearGradient id="pb" x1="0" y1="0" x2="0" y2="1"><stop offset="0" stop-color="#9a8a50"/><stop offset="1" stop-color="#46689e"/></linearGradient></defs><path d="M0.5 0.5 H11.5 L13.5 2.5 L12 6 L11.5 10 L13.5 13 V14.5 H0.5 Z" fill="#fff" stroke="#a8bce0" stroke-width="0.8"/><rect x="1" y="1" width="8" height="13" fill="#e2f6fa"/><path d="M0.5 14.5 V0.5 H11" fill="none" stroke="url(#pb)" stroke-width="1"/><path d="M0.5 0.5 V14.5" stroke="url(#pb)" stroke-width="1"/><path d="M0 14.5 H13.5" stroke="#46689e" stroke-width="1"/><path d="M1 7.5 H11.5 M9.5 1 V14" stroke="#b4c0d8" stroke-width="0.9"/><circle cx="5.4" cy="4.4" r="2.5" fill="#e02838"/><path d="M5.5 9 L8.2 13.6 H2.8 Z" fill="#f0a020" stroke="#d88a18" stroke-width="0.6"/></svg>
<svg class="a" style="left:916px;top:576px;" width="13" height="12" viewBox="0 0 13 12"><path d="M0 3 L3 0 L6.5 3.5 L10 0 L13 3 L9.5 6 L13 9 L10 12 L6.5 8.5 L3 12 L0 9 L3.5 6 Z" fill="url(#dzr)"/></svg>
<svg class="a" style="left:940px;top:574px;" width="17" height="17" viewBox="0 0 17 17"><g fill="none" stroke-width="1.1"><path d="M1 3.5 H8" stroke="#4a90d0"/><path d="M4 3.5 H8 M5.5 1 L8.5 3.5 L5.5 6" stroke="#4a5670"/><path d="M9.5 1 V6.5" stroke="#2a3a70"/><path d="M1 13.5 H8" stroke="#4a90d0"/><path d="M4 13.5 H8 M5.5 11 L8.5 13.5 L5.5 16" stroke="#4a5670"/><path d="M9.5 11 V16.5" stroke="#2a3a70"/></g><path d="M4.5 7 H11 V5 L16.5 8.5 L11 12 V10 H4.5 Q3.5 8.5 4.5 7 Z" fill="url(#gyel)" stroke="#c88a18" stroke-width="1" stroke-linejoin="round"/></svg>
<div class="a" style="left:10px;top:733px;width:55px;height:30px;border:1px solid #a8a8a8;border-radius:5px;background:#f6f6f6;clip-path:inset(0 0 4px 0);"></div>
<div class="a" style="left:5px;top:758px;width:1022px;height:1px;background:#fff;"></div>
<div class="a" style="left:18.6px;top:737.2px;width:1.7px;height:1.7px;background:#000;"></div>
<div class="a" style="left:18.6px;top:741.2px;width:1.7px;height:1.7px;background:#000;"></div>
<div class="a" style="left:18.6px;top:745.2px;width:1.7px;height:1.7px;background:#000;"></div>
<div class="a" style="left:18.6px;top:749.2px;width:1.7px;height:1.7px;background:#000;"></div>
<div class="a" style="left:18.6px;top:753.2px;width:1.7px;height:1.7px;background:#000;"></div>
<div class="a" style="left:739px;top:732px;width:1px;height:26px;background:#8c8c8c;"></div>
<div class="t" style="left:369.5px;top:1px;font-size:14px;color:#fff;font-weight:bold;text-shadow:1px 1px 0 #2a3648;letter-spacing:0.033px;">Java - BinaryChop.html - Eclipse SDK</div>
<div class="t" style="left:13.6px;top:25px;font-size:13.5px;color:#000;letter-spacing:-0.391px;"><u>F</u>ile</div>
<div class="t" style="left:49.9px;top:25px;font-size:13.5px;color:#000;letter-spacing:-0.020px;"><u>E</u>dit</div>
<div class="t" style="left:89px;top:25px;font-size:13.5px;color:#000;letter-spacing:-0.187px;"><u>N</u>avigate</div>
<div class="t" style="left:156.5px;top:25px;font-size:13.5px;color:#000;letter-spacing:-0.299px;">Se<u>a</u>rch</div>
<div class="t" style="left:213.7px;top:25px;font-size:13.5px;color:#000;"><u>P</u>roject</div>
<div class="t" style="left:271.6px;top:25px;font-size:13.5px;color:#000;letter-spacing:-0.194px;"><u>R</u>un</div>
<div class="t" style="left:311.4px;top:25px;font-size:13.5px;color:#000;letter-spacing:0.156px;">Fit Testing</div>
<div class="t" style="left:389.3px;top:25px;font-size:13.5px;color:#000;letter-spacing:0.128px;"><u>W</u>indow</div>
<div class="t" style="left:453.5px;top:25px;font-size:13.5px;color:#000;letter-spacing:-0.066px;"><u>H</u>elp</div>
<div class="t" style="left:924px;top:55px;font-size:13.5px;color:#000;letter-spacing:-0.583px;">Java</div>
<div class="t" style="left:33.6px;top:86px;font-size:13.5px;color:#000;letter-spacing:-0.223px;">Package Explorer</div>
<div class="t" style="left:48.5px;top:141px;font-size:13.5px;color:#000;letter-spacing:-0.061px;">SampleProject</div>
<div class="t" style="left:64px;top:163px;font-size:13.5px;color:#000;letter-spacing:0.167px;">src</div>
<div class="t" style="left:64.5px;top:185px;font-size:13.5px;color:#000;width:194.5px;overflow:hidden;letter-spacing:0.09px;">JRE System Library [jdk1.5.0_04</div>
<div class="t" style="left:64px;top:207px;font-size:13.5px;color:#fff;letter-spacing:0.280px;">BinaryChop.html</div>
<div class="t" style="left:288.8px;top:86px;font-size:13.5px;color:#000;letter-spacing:0.159px;">Wiki: Binary Chop</div>
<div class="t" style="left:448.7px;top:86px;font-size:13.5px;color:#fff;letter-spacing:0.247px;">BinaryChop.html</div>
<div class="t" style="left:272.4px;top:115px;font-size:13.5px;color:#000;letter-spacing:0.095px;">Column</div>
<div class="t" style="left:398.4px;top:115px;font-size:13.5px;color:#000;letter-spacing:0.095px;">Column</div>
<div class="t" style="left:478.4px;top:115px;font-size:13.5px;color:#000;letter-spacing:0.095px;">Column</div>
<div class="t" style="left:543.4px;top:115px;font-size:13.5px;color:#000;letter-spacing:0.095px;">Column</div>
<div class="t" style="left:605.4px;top:115px;font-size:13.5px;color:#000;letter-spacing:0.095px;">Column</div>
<div class="t" style="left:667.4px;top:115px;font-size:13.5px;color:#000;letter-spacing:0.095px;">Column</div>
<div class="t" style="left:733.4px;top:115px;font-size:13.5px;color:#000;letter-spacing:0.095px;">Column</div>
<div class="t" style="left:287.4px;top:139px;font-size:13.5px;color:#fff;letter-spacing:0.372px;">Fit Test [1]</div>
<div class="t" style="left:303.3px;top:161px;font-size:13.5px;color:#000;letter-spacing:0.053px;">eg.BinaryChop</div>
<div class="t" style="left:323.5px;top:205px;font-size:13.5px;color:#000;letter-spacing:0.25px;">key</div>
<div class="t" style="left:397.7px;top:205px;font-size:13.5px;color:#000;letter-spacing:0.25px;"> array</div>
<div class="t" style="left:482px;top:205px;font-size:13.5px;color:#000;letter-spacing:0.25px;">mon()</div>
<div class="t" style="left:546.6px;top:205px;font-size:13.5px;color:#000;letter-spacing:0.25px;">tue()</div>
<div class="t" style="left:609px;top:205px;font-size:13.5px;color:#000;letter-spacing:0.25px;">wed()</div>
<div class="t" style="left:670.6px;top:205px;font-size:13.5px;color:#000;letter-spacing:0.25px;">thr()</div>
<div class="t" style="left:736.6px;top:205px;font-size:13.5px;color:#000;letter-spacing:0.25px;">fri()</div>
<div class="t" style="left:323.5px;top:227px;font-size:13.5px;color:#000;letter-spacing:0.25px;">3</div>
<div class="t" style="left:397.7px;top:227px;font-size:13.5px;color:#000;letter-spacing:0.25px;">&amp;nbsp;</div>
<div class="t" style="left:482px;top:227px;font-size:13.5px;color:#000;letter-spacing:0.25px;">-1</div>
<div class="t" style="left:546.6px;top:227px;font-size:13.5px;color:#000;letter-spacing:0.25px;">-1</div>
<div class="t" style="left:609px;top:227px;font-size:13.5px;color:#000;letter-spacing:0.25px;">-1</div>
<div class="t" style="left:670.6px;top:227px;font-size:13.5px;color:#000;letter-spacing:0.25px;">-1</div>
<div class="t" style="left:736.6px;top:227px;font-size:13.5px;color:#000;letter-spacing:0.25px;">-1</div>
<div class="t" style="left:323.5px;top:249px;font-size:13.5px;color:#000;letter-spacing:0.25px;">3</div>
<div class="t" style="left:397.7px;top:249px;font-size:13.5px;color:#000;letter-spacing:0.25px;"> 1</div>
<div class="t" style="left:482px;top:249px;font-size:13.5px;color:#000;letter-spacing:0.25px;">-1</div>
<div class="t" style="left:546.6px;top:249px;font-size:13.5px;color:#000;letter-spacing:0.25px;">-1</div>
<div class="t" style="left:609px;top:249px;font-size:13.5px;color:#000;letter-spacing:0.25px;">-1</div>
<div class="t" style="left:670.6px;top:249px;font-size:13.5px;color:#000;letter-spacing:0.25px;">-1</div>
<div class="t" style="left:736.6px;top:249px;font-size:13.5px;color:#000;letter-spacing:0.25px;">-1</div>
<div class="t" style="left:323.5px;top:271px;font-size:13.5px;color:#000;letter-spacing:0.25px;">1</div>
<div class="t" style="left:397.7px;top:271px;font-size:13.5px;color:#000;letter-spacing:0.25px;"> 1</div>
<div class="t" style="left:482px;top:271px;font-size:13.5px;color:#000;letter-spacing:0.25px;">0</div>
<div class="t" style="left:546.6px;top:271px;font-size:13.5px;color:#000;letter-spacing:0.25px;">0</div>
<div class="t" style="left:609px;top:271px;font-size:13.5px;color:#000;letter-spacing:0.25px;">0</div>
<div class="t" style="left:670.6px;top:271px;font-size:13.5px;color:#000;letter-spacing:0.25px;">0</div>
<div class="t" style="left:736.6px;top:271px;font-size:13.5px;color:#000;letter-spacing:0.25px;">0</div>
<div class="t" style="left:323.5px;top:293px;font-size:13.5px;color:#000;letter-spacing:0.25px;">1</div>
<div class="t" style="left:397.7px;top:293px;font-size:13.5px;color:#000;letter-spacing:0.25px;"> 1, 3, 5</div>
<div class="t" style="left:482px;top:293px;font-size:13.5px;color:#000;letter-spacing:0.25px;">0</div>
<div class="t" style="left:546.6px;top:293px;font-size:13.5px;color:#000;letter-spacing:0.25px;">0</div>
<div class="t" style="left:609px;top:293px;font-size:13.5px;color:#000;letter-spacing:0.25px;">0</div>
<div class="t" style="left:670.6px;top:293px;font-size:13.5px;color:#000;letter-spacing:0.25px;">0</div>
<div class="t" style="left:736.6px;top:293px;font-size:13.5px;color:#000;letter-spacing:0.25px;">0</div>
<div class="t" style="left:323.5px;top:315px;font-size:13.5px;color:#000;letter-spacing:0.25px;">3</div>
<div class="t" style="left:397.7px;top:315px;font-size:13.5px;color:#000;letter-spacing:0.25px;"> 1, 3, 5</div>
<div class="t" style="left:482px;top:315px;font-size:13.5px;color:#000;letter-spacing:0.25px;">1</div>
<div class="t" style="left:546.6px;top:315px;font-size:13.5px;color:#000;letter-spacing:0.25px;">1</div>
<div class="t" style="left:609px;top:315px;font-size:13.5px;color:#000;letter-spacing:0.25px;">1</div>
<div class="t" style="left:670.6px;top:315px;font-size:13.5px;color:#000;letter-spacing:0.25px;">1</div>
<div class="t" style="left:736.6px;top:315px;font-size:13.5px;color:#000;letter-spacing:0.25px;">1</div>
<div class="t" style="left:323.5px;top:337px;font-size:13.5px;color:#000;letter-spacing:0.25px;">5</div>
<div class="t" style="left:397.7px;top:337px;font-size:13.5px;color:#000;letter-spacing:0.25px;"> 1, 3, 5</div>
<div class="t" style="left:482px;top:337px;font-size:13.5px;color:#000;letter-spacing:0.25px;">2</div>
<div class="t" style="left:546.6px;top:337px;font-size:13.5px;color:#000;letter-spacing:0.25px;">2</div>
<div class="t" style="left:609px;top:337px;font-size:13.5px;color:#000;letter-spacing:0.25px;">2</div>
<div class="t" style="left:670.6px;top:337px;font-size:13.5px;color:#000;letter-spacing:0.25px;">2</div>
<div class="t" style="left:736.6px;top:337px;font-size:13.5px;color:#000;letter-spacing:0.25px;">2</div>
<div class="t" style="left:323.5px;top:359px;font-size:13.5px;color:#000;letter-spacing:0.25px;">0</div>
<div class="t" style="left:397.7px;top:359px;font-size:13.5px;color:#000;letter-spacing:0.25px;"> 1, 3, 5</div>
<div class="t" style="left:482px;top:359px;font-size:13.5px;color:#000;letter-spacing:0.25px;">-1</div>
<div class="t" style="left:546.6px;top:359px;font-size:13.5px;color:#000;letter-spacing:0.25px;">-1</div>
<div class="t" style="left:609px;top:359px;font-size:13.5px;color:#000;letter-spacing:0.25px;">-1</div>
<div class="t" style="left:670.6px;top:359px;font-size:13.5px;color:#000;letter-spacing:0.25px;">-1</div>
<div class="t" style="left:736.6px;top:359px;font-size:13.5px;color:#000;letter-spacing:0.25px;">-1</div>
<div class="t" style="left:323.5px;top:381px;font-size:13.5px;color:#000;letter-spacing:0.25px;">2</div>
<div class="t" style="left:397.7px;top:381px;font-size:13.5px;color:#000;letter-spacing:0.25px;"> 1, 3, 5</div>
<div class="t" style="left:482px;top:381px;font-size:13.5px;color:#000;letter-spacing:0.25px;">-1</div>
<div class="t" style="left:546.6px;top:381px;font-size:13.5px;color:#000;letter-spacing:0.25px;">-1</div>
<div class="t" style="left:609px;top:381px;font-size:13.5px;color:#000;letter-spacing:0.25px;">-1</div>
<div class="t" style="left:670.6px;top:381px;font-size:13.5px;color:#000;letter-spacing:0.25px;">-1</div>
<div class="t" style="left:736.6px;top:381px;font-size:13.5px;color:#000;letter-spacing:0.25px;">-1</div>
<div class="t" style="left:323.5px;top:403px;font-size:13.5px;color:#000;letter-spacing:0.25px;">4</div>
<div class="t" style="left:397.7px;top:403px;font-size:13.5px;color:#000;letter-spacing:0.25px;"> 1, 3, 5</div>
<div class="t" style="left:482px;top:403px;font-size:13.5px;color:#000;letter-spacing:0.25px;">-1</div>
<div class="t" style="left:546.6px;top:403px;font-size:13.5px;color:#000;letter-spacing:0.25px;">-1</div>
<div class="t" style="left:609px;top:403px;font-size:13.5px;color:#000;letter-spacing:0.25px;">-1</div>
<div class="t" style="left:670.6px;top:403px;font-size:13.5px;color:#000;letter-spacing:0.25px;">-1</div>
<div class="t" style="left:736.6px;top:403px;font-size:13.5px;color:#000;letter-spacing:0.25px;">-1</div>
<div class="t" style="left:323.5px;top:425px;font-size:13.5px;color:#000;letter-spacing:0.25px;">6</div>
<div class="t" style="left:397.7px;top:425px;font-size:13.5px;color:#000;letter-spacing:0.25px;"> 1, 3, 5</div>
<div class="t" style="left:482px;top:425px;font-size:13.5px;color:#000;letter-spacing:0.25px;">-1</div>
<div class="t" style="left:546.6px;top:425px;font-size:13.5px;color:#000;letter-spacing:0.25px;">-1</div>
<div class="t" style="left:609px;top:425px;font-size:13.5px;color:#000;letter-spacing:0.25px;">-1</div>
<div class="t" style="left:670.6px;top:425px;font-size:13.5px;color:#000;letter-spacing:0.25px;">-1</div>
<div class="t" style="left:736.6px;top:425px;font-size:13.5px;color:#000;letter-spacing:0.25px;">-1</div>
<div class="t" style="left:323.5px;top:447px;font-size:13.5px;color:#000;letter-spacing:0.25px;">1</div>
<div class="t" style="left:397.7px;top:447px;font-size:13.5px;color:#000;letter-spacing:0.25px;"> 1, 3, 5, 7</div>
<div class="t" style="left:482px;top:447px;font-size:13.5px;color:#000;letter-spacing:0.25px;">0</div>
<div class="t" style="left:546.6px;top:447px;font-size:13.5px;color:#000;letter-spacing:0.25px;">0</div>
<div class="t" style="left:609px;top:447px;font-size:13.5px;color:#000;letter-spacing:0.25px;">0</div>
<div class="t" style="left:670.6px;top:447px;font-size:13.5px;color:#000;letter-spacing:0.25px;">0</div>
<div class="t" style="left:736.6px;top:447px;font-size:13.5px;color:#000;letter-spacing:0.25px;">0</div>
<div class="t" style="left:323.5px;top:469px;font-size:13.5px;color:#000;letter-spacing:0.25px;">3</div>
<div class="t" style="left:397.7px;top:469px;font-size:13.5px;color:#000;letter-spacing:0.25px;"> 1, 3, 5, 7</div>
<div class="t" style="left:482px;top:469px;font-size:13.5px;color:#000;letter-spacing:0.25px;">1</div>
<div class="t" style="left:546.6px;top:469px;font-size:13.5px;color:#000;letter-spacing:0.25px;">1</div>
<div class="t" style="left:609px;top:469px;font-size:13.5px;color:#000;letter-spacing:0.25px;">1</div>
<div class="t" style="left:670.6px;top:469px;font-size:13.5px;color:#000;letter-spacing:0.25px;">1</div>
<div class="t" style="left:736.6px;top:469px;font-size:13.5px;color:#000;letter-spacing:0.25px;">1</div>
<div class="t" style="left:323.5px;top:491px;font-size:13.5px;color:#000;letter-spacing:0.25px;">5</div>
<div class="t" style="left:397.7px;top:491px;font-size:13.5px;color:#000;letter-spacing:0.25px;"> 1, 3, 5, 7</div>
<div class="t" style="left:482px;top:491px;font-size:13.5px;color:#000;letter-spacing:0.25px;">2</div>
<div class="t" style="left:546.6px;top:491px;font-size:13.5px;color:#000;letter-spacing:0.25px;">2</div>
<div class="t" style="left:609px;top:491px;font-size:13.5px;color:#000;letter-spacing:0.25px;">2</div>
<div class="t" style="left:670.6px;top:491px;font-size:13.5px;color:#000;letter-spacing:0.25px;">2</div>
<div class="t" style="left:736.6px;top:491px;font-size:13.5px;color:#000;letter-spacing:0.25px;">2</div>
<div class="t" style="left:323.5px;top:513px;font-size:13.5px;color:#000;letter-spacing:0.25px;">7</div>
<div class="t" style="left:397.7px;top:513px;font-size:13.5px;color:#000;letter-spacing:0.25px;"> 1, 3, 5, 7</div>
<div class="t" style="left:482px;top:513px;font-size:13.5px;color:#000;letter-spacing:0.25px;">3</div>
<div class="t" style="left:546.6px;top:513px;font-size:13.5px;color:#000;letter-spacing:0.25px;">3</div>
<div class="t" style="left:609px;top:513px;font-size:13.5px;color:#000;letter-spacing:0.25px;">3</div>
<div class="t" style="left:670.6px;top:513px;font-size:13.5px;color:#000;letter-spacing:0.25px;">3</div>
<div class="t" style="left:736.6px;top:513px;font-size:13.5px;color:#000;letter-spacing:0.25px;">3</div>
<div class="t" style="left:323.5px;top:535px;font-size:13.5px;color:#000;letter-spacing:0.25px;">0</div>
<div class="t" style="left:397.7px;top:535px;font-size:13.5px;color:#000;letter-spacing:0.25px;"> 1, 3, 5, 7</div>
<div class="t" style="left:482px;top:535px;font-size:13.5px;color:#000;letter-spacing:0.25px;">-1</div>
<div class="t" style="left:546.6px;top:535px;font-size:13.5px;color:#000;letter-spacing:0.25px;">-1</div>
<div class="t" style="left:609px;top:535px;font-size:13.5px;color:#000;letter-spacing:0.25px;">-1</div>
<div class="t" style="left:670.6px;top:535px;font-size:13.5px;color:#000;letter-spacing:0.25px;">-1</div>
<div class="t" style="left:736.6px;top:535px;font-size:13.5px;color:#000;letter-spacing:0.25px;">-1</div>
<div class="t" style="left:856px;top:86px;font-size:13.5px;color:#000;letter-spacing:0.317px;">Outline</div>
<div class="t" style="left:835.5px;top:110px;font-size:13.5px;color:#000;letter-spacing:0.148px;">An outline is not available.</div>
<div class="t" style="left:288.8px;top:573px;font-size:13.5px;color:#000;letter-spacing:-0.191px;">Problems</div>
<div class="t" style="left:387.7px;top:573px;font-size:13.5px;color:#000;letter-spacing:-0.214px;">Javadoc</div>
<div class="t" style="left:443px;top:573px;font-size:13.5px;color:#000;letter-spacing:0.055px;">Declaration</div>
<div class="t" style="left:267.5px;top:597px;font-size:13.5px;color:#000;letter-spacing:0.187px;">0 errors, 0 warnings, 0 infos</div>
<div class="t" style="left:291.4px;top:620px;font-size:13.5px;color:#000;letter-spacing:0.088px;">Description</div>
<div class="t" style="left:491.4px;top:620px;font-size:13.5px;color:#000;letter-spacing:-0.285px;">Resource</div>
<div class="t" style="left:566.5px;top:620px;font-size:13.5px;color:#000;letter-spacing:0.135px;">In Folder</div>
<div class="t" style="left:716.5px;top:620px;font-size:13.5px;color:#000;letter-spacing:0.182px;">Location</div>
</body></html>
